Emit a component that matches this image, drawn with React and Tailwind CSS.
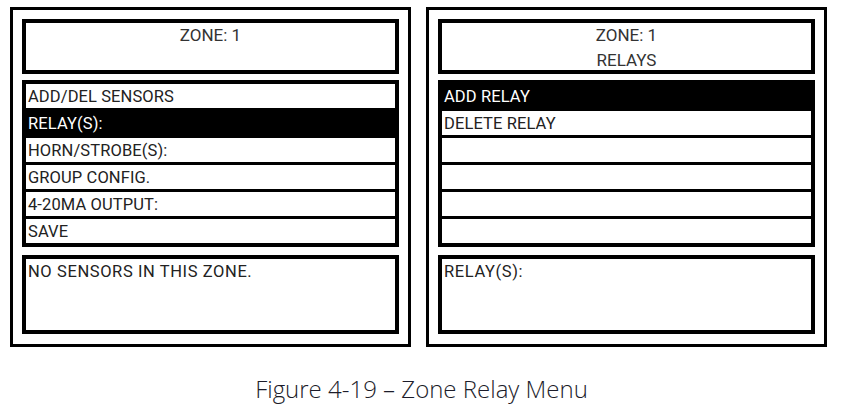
const font = { fontFamily: '"Roboto", "Liberation Sans", sans-serif' };

function MenuRow({ label, active }) {
  return (
    <div
      className={`h-[24px] flex items-center pl-[2px] pt-[3px] text-[16.5px] leading-none tracking-[0.1px] ${
        active ? "bg-black text-white" : "bg-white text-[#222]"
      }`}
    >
      {label}
    </div>
  );
}

function Screen({ title, menu, info }) {
  return (
    <div className="w-[401px] border-[3px] border-black bg-white px-[9px] pt-[9px] pb-[10px] flex flex-col">
      <div className="h-[55px] border-[4px] border-black flex flex-col items-center text-[17px] text-[#333]">
        {title.map((t) => (
          <div key={t} className="h-[25px] leading-[25px]">
            {t}
          </div>
        ))}
      </div>
      <div className="mt-[6px] border-[4px] border-black bg-black flex flex-col gap-[3px]">
        {menu.map((m, i) => (
          <MenuRow key={i} label={m.label} active={m.active} />
        ))}
      </div>
      <div className="mt-[8px] h-[79px] border-[4px] border-black px-[2px] pt-[3px] text-[16.5px] leading-[20px] tracking-[0.6px] text-[#222]">
        {info}
      </div>
    </div>
  );
}

export default function App() {
  return (
    <div className="w-[843px] h-[414px] bg-white" style={font}>
      <div className="flex gap-[15px] pl-[10px] pt-[7px]">
        <Screen
          title={["ZONE: 1"]}
          menu={[
            { label: "ADD/DEL SENSORS" },
            { label: "RELAY(S):", active: true },
            { label: "HORN/STROBE(S):" },
            { label: "GROUP CONFIG." },
            { label: "4-20MA OUTPUT:" },
            { label: "SAVE" },
          ]}
          info="NO SENSORS IN THIS ZONE."
        />
        <Screen
          title={["ZONE: 1", "RELAYS"]}
          menu={[
            { label: "ADD RELAY", active: true },
            { label: "DELETE RELAY" },
            { label: "" },
            { label: "" },
            { label: "" },
            { label: "" },
          ]}
          info="RELAY(S):"
        />
      </div>
      <p
        className="mt-[24px] text-center text-[24px] text-[#1c1c2a]"
        style={{ fontFamily: '"Open Sans", "Liberation Sans", sans-serif', fontWeight: 300 }}
      >
        Figure 4-19 – Zone Relay Menu
      </p>
    </div>
  );
}
